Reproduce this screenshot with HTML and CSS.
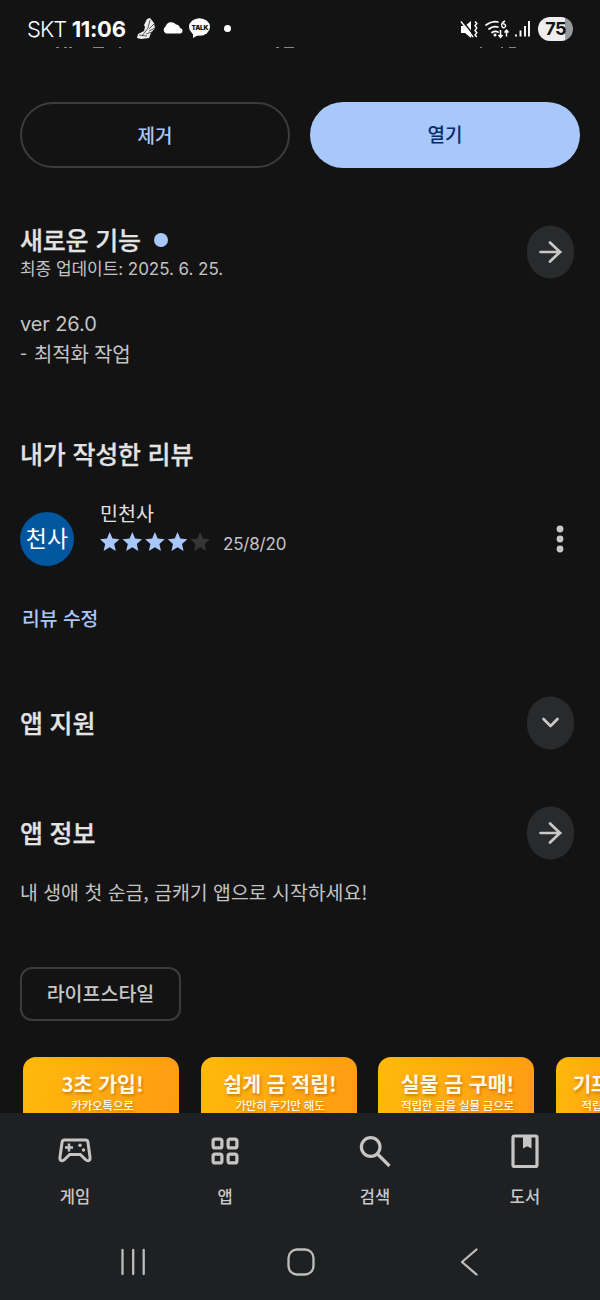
FILE: index.html
```html
<!DOCTYPE html>
<html lang="ko">
<head>
<meta charset="utf-8">
<title>앱 정보</title>
<link rel="stylesheet" href="styles.css">
</head>
<body>
<div class="phone">
  <header class="status">
    <span class="carrier">SKT</span>
    <span class="clock">11:06</span>
    <svg class="notif" width="96" height="24" viewBox="0 0 96 24">
      <path d="M10 2l3-1 4 5 1 5-4 5-2 5-8 1-4-1 1-4 6-3 1-4-1-2z" fill="#eee"/>
      <path d="M13 3l-2 8-6 8M17 7l-5 5M18 11l-6 3M15 15l-6 2M2 18l8 1" stroke="#333" stroke-width=".8" fill="none"/>
      <path d="M29 16.500a4 4 0 0 1-.5-7 6 6 0 0 1 10.500-2 4.500 4.500 0 0 1 4 3.500 2.800 2.800 0 0 1 .5 5.500z" fill="#fff"/>
      <ellipse cx="62.500" cy="10" rx="10.500" ry="8.700" fill="#fff"/>
      <path d="M56 15v6l7-4z" fill="#fff"/>
      <text class="talk" x="54.600" y="12.500">TALK</text>
      <circle cx="90.500" cy="11.500" r="3.500" fill="#fff"/>
    </svg>
    <svg class="signals" width="70" height="22" viewBox="0 0 70 22">
      <path d="M1 6h4l6-5v17l-6-5H1z" fill="#fff"/>
      <path d="M2 0l12 15.500" stroke="#131313" stroke-width="1.500"/>
      <path d="M1 1.500l12 15.500" stroke="#fff" stroke-width="1.500"/>
      <path d="M15 1.500l1.800 2-1.800 2.300 1.800 2.300-1.800 2.300 1.800 2.300-1.800 2.200 1.800 2" stroke="#fff" stroke-width="1.500" fill="none"/>
      <g fill="none" stroke="#fff" stroke-width="1.700" stroke-linecap="round"><path d="M26 5q6-4.500 12-3"/><path d="M29 9q4-3.500 9-2"/><path d="M32 12.500q3-2 6-.5"/></g>
      <circle cx="35" cy="15" r="1.500" fill="#fff"/>
      <path d="M45 1q-4 2-3.200 5a1.900 1.900 0 1 0 1.200-2" stroke="#fff" stroke-width="1.400" fill="none"/>
      <path d="M40.500 10v7m-2-2l2 2.300 2-2.300M46.500 16.500v-6m-2 2l2-2.300 2 2.300" stroke="#fff" stroke-width="1.500" fill="none"/>
      <path d="M56 14.500v2M60.500 10.500v6M65 6v10.500M69 1v15.500" stroke="#fff" stroke-width="1.900"/>
    </svg>
    <span class="battery">75</span>
  </header>

  <main class="content">
    <svg class="cutline" width="600" height="2" viewBox="0 0 600 2"><path d="M56 .5h3M64 .5h3M69 .5h3M93 .5h11M119 .5h2M276 .5h3M284 .5h10M480 .5h2M501 .5h2M509 .5h7" stroke="#888" stroke-width="1"/></svg>
    <div class="actions">
      <button class="btn btn-outline">제거</button>
      <button class="btn btn-fill">열기</button>
    </div>

    <section class="row whats-new">
      <div class="new-head">
        <h2 class="title new-title">새로운 기능<i class="dot"></i></h2>
        <p class="updated">최종 업데이트: 2025. 6. 25.</p>
      </div>
      <svg class="circle" viewBox="0 0 47 54"><rect y=".5" width="47" height="53" rx="23.500" ry="25"/><path d="M13.500 27h20M23 17.500l10 9.500-10 9.500"/></svg>
    </section>
    <div class="notes"><p class="version">ver 26.0</p><p class="change"><span class="dash">-</span>최적화 작업</p></div>

    <h2 class="title my-review">내가 작성한 리뷰</h2>
    <section class="review">
      <div class="avatar">천사</div>
      <div class="review-body">
        <p class="name">민천사</p>
        <div class="rating">
          <svg class="stars" width="110" height="20" viewBox="0 0 110 20">
            <defs><path id="star" d="M9.700 0l2.800 6.600 7 .6-5.300 4.700 1.600 7-6.100-3.700-6.100 3.700 1.600-7L0 7.200l7-.6z"/></defs>
            <g fill="#a8c7fa"><use href="#star"/><use href="#star" x="22.600"/><use href="#star" x="45.200"/><use href="#star" x="67.800"/></g>
            <use href="#star" x="90.400" fill="#353535"/>
          </svg>
          <span class="date">25/8/20</span>
        </div>
      </div>
      <svg class="more" width="8" height="28" viewBox="0 0 8 28"><circle cx="4" cy="4" r="3.400"/><circle cx="4" cy="14" r="3.400"/><circle cx="4" cy="24" r="3.400"/></svg>
    </section>
    <a class="edit">리뷰 수정</a>

    <section class="row support">
      <h2 class="title">앱 지원</h2>
      <svg class="circle" viewBox="0 0 47 54"><rect y=".5" width="47" height="53" rx="23.500" ry="25"/><path d="M16.500 23l7 7 7-7"/></svg>
    </section>
    <section class="row about">
      <h2 class="title">앱 정보</h2>
      <svg class="circle" viewBox="0 0 47 54"><rect y=".5" width="47" height="53" rx="23.500" ry="25"/><path d="M13.500 27h20M23 17.500l10 9.500-10 9.500"/></svg>
    </section>
    <p class="summary">내 생애 첫 순금, 금캐기 앱으로 시작하세요!</p>
    <div class="chip">라이프스타일</div>

    <div class="shots">
      <div class="shot"><b>3초 가입!</b><small>카카오톡으로</small></div>
      <div class="shot"><b>쉽게 금 적립!</b><small>가만히 두기만 해도</small></div>
      <div class="shot"><b>실물 금 구매!</b><small>적립한 금을 실물 금으로</small></div>
      <div class="shot shot-last"><b>기프</b><small>적립</small></div>
    </div>
  </main>

  <nav class="tabs">
    <div class="tab">
      <svg width="36" height="36" viewBox="0 0 36 36"><path d="M7.500 7h21q2 0 2.400 2L33 24q.5 3.800-2 3.800-1.300 0-2.300-1l-5.400-5.300H12.700l-5.400 5.300q-1 1-2.300 1-2.500 0-2-3.800L5.100 9q.4-2 2.400-2z" fill="none" stroke="#c5c5c5" stroke-width="3"/><path d="M8 14.500h8M12 10.500v8" stroke="#c5c5c5" stroke-width="2.500"/><circle cx="23" cy="12.300" r="1.700" fill="#c5c5c5"/><circle cx="26.500" cy="17" r="1.700" fill="#c5c5c5"/></svg>
      <span>게임</span>
    </div>
    <div class="tab">
      <svg width="36" height="36" viewBox="0 0 36 36" fill="none" stroke="#c5c5c5" stroke-width="3.200"><rect x="6.100" y="6.100" width="8.800" height="8.800" rx="2"/><rect x="21.100" y="6.100" width="8.800" height="8.800" rx="2"/><rect x="6.100" y="21.100" width="8.800" height="8.800" rx="2"/><rect x="21.100" y="21.100" width="8.800" height="8.800" rx="2"/></svg>
      <span>앱</span>
    </div>
    <div class="tab">
      <svg width="36" height="36" viewBox="0 0 36 36" fill="none" stroke="#c5c5c5" stroke-width="3.200"><circle cx="13.700" cy="14" r="9.300"/><path d="M20.500 21L32.500 33"/></svg>
      <span>검색</span>
    </div>
    <div class="tab">
      <svg width="36" height="36" viewBox="0 0 36 36"><rect x="6" y="3" width="24" height="30.500" rx="1.500" fill="none" stroke="#c5c5c5" stroke-width="3.200"/><path d="M16 3h8.500v12.500l-4.200-2.300-4.300 2.300z" fill="#c5c5c5"/></svg>
      <span>도서</span>
    </div>
  </nav>
  <footer class="sysnav">
    <svg width="26" height="28" viewBox="0 0 26 28"><path d="M2.500 2v24M13.200 2v24M23.700 2v24"/></svg>
    <svg class="home" width="28" height="28" viewBox="0 0 28 28"><rect x="1.500" y="1.500" width="25" height="25" rx="8.500"/></svg>
    <svg width="18" height="28" viewBox="0 0 18 28"><path d="M16.500 1.500L2 14l14.500 12.500"/></svg>
  </footer>
</div>
</body>
</html>
```
FILE: styles.css
```css
* { box-sizing: border-box; margin: 0; padding: 0; }
body { width: 600px; height: 1300px; overflow: hidden; background: #131313; color: #e3e3e3; font-family: "Noto Sans CJK KR", sans-serif; }
svg { display: block; flex: none; }
.phone { display: flex; flex-direction: column; height: 1300px; white-space: nowrap; }
.status { height: 47px; flex: none; display: flex; align-items: center; padding: 10px 27px 0; color: #fff; font-family: Inter, sans-serif; }
.carrier { width: 45px; font-size: 22px; letter-spacing: -1px; font-weight: 300; }
.clock { width: 66px; font-size: 22px; font-weight: 700; letter-spacing: -.3px; }
.talk { font: 900 6.500px Inter, sans-serif; fill: #131313; letter-spacing: -.3px; }
.notif { margin-top: 1px; }
.signals { margin-left: 227px; margin-top: 4px; }
.battery { width: 35px; height: 24px; margin-left: 8px; border-radius: 12px; background: linear-gradient(90deg, #eee 78%, #999 78%); color: #131313; font-size: 18px; line-height: 24px; font-weight: 700; text-align: center; letter-spacing: -.5px; }
.content { height: 1066px; flex: none; overflow: hidden; display: flex; flex-direction: column; align-items: flex-start; }
.content > * { flex: none; }
.actions { display: flex; gap: 20px; margin: 53px 0 0 20px; }
.btn { width: 270px; height: 66px; border-radius: 33px; font: 500 19px/62px "Noto Sans CJK KR", sans-serif; border: 0; padding-bottom: 2px; }
.btn-outline { background: none; border: 2px solid #3c3c3c; color: #a8c7fa; }
.btn-fill { background: #a8c7fa; color: #062e6f; }
.title { font-size: 25px; line-height: 36px; font-weight: 500; letter-spacing: -.2px; -webkit-text-stroke: .25px; }
.row { width: 600px; padding: 0 26px 0 20px; display: flex; align-items: center; justify-content: space-between; height: 54px; }
.row > .title { padding-bottom: 2px; }
.circle { width: 47px; height: 54px; }
.circle rect { fill: #282a2c; }
.circle path { fill: none; stroke: #c8c8c8; stroke-width: 2.700; stroke-linecap: round; stroke-linejoin: round; }
.whats-new { margin-top: 57px; }
.new-head { padding-bottom: 2px; }
.new-title { display: flex; align-items: center; gap: 13px; }
.dot { width: 14px; height: 14px; margin-top: 2px; border-radius: 50%; background: #a8c7fa; }
.updated { font: 17px/24px Inter, "Noto Sans CJK KR", sans-serif; color: #c4c4c4; letter-spacing: -.05px; }
.notes { margin: 30px 0 0 20px; color: #c4c4c4; font-size: 20px; line-height: 30px; }
.version { font: 20px/30px Inter, sans-serif; letter-spacing: -.1px; }
.change { letter-spacing: -.2px; }
.dash { display: inline-block; width: 14px; }
.my-review { margin: 66px 0 0 20px; }
.review { display: flex; width: 600px; height: 70px; margin: 28px 0 0; padding-left: 20px; }
.avatar { width: 54px; height: 54px; margin-top: 13px; border-radius: 50%; background: #00569f; color: #fff; font-size: 23px; line-height: 50px; text-align: center; }
.review-body { width: 482px; padding-left: 26px; }
.name { font-size: 19.500px; line-height: 28px; }
.rating { display: flex; align-items: center; height: 28px; margin-top: 1px; }
.date { margin: 4px 0 0 13px; font: 17px/24px Inter, sans-serif; color: #c4c4c4; letter-spacing: -.2px; }
.more { margin: 26px 0 0; fill: #c8c8c8; }
.edit { margin: 35px 0 0 22px; font-size: 19.300px; line-height: 28px; font-weight: 500; color: #a8c7fa; }
.support { margin-top: 64px; }
.about { margin-top: 56px; }
.summary { margin: 18px 0 0 20px; font-size: 19.400px; line-height: 28px; color: #c4c4c4; }
.chip { margin: 61px 0 0 20px; width: 161px; height: 54px; border: 2px solid #3c3c3c; border-radius: 12px; text-align: center; font-size: 19.500px; line-height: 48px; font-weight: 500; color: #c8c8c8; }
.shots { display: flex; gap: 21.500px; margin: 36px 0 0 23px; }
.shot { width: 156px; height: 280px; flex: none; padding: 12px 0 0 3px; border-radius: 13px; background: linear-gradient(100deg, #ffb90a, #ff9416); color: #fff8e4; text-align: center; text-shadow: 1px 2px 3px #a85a0099; }
.shot b { display: block; font-size: 20.500px; line-height: 28px; }
.shot small { display: block; font-size: 11.500px; line-height: 16px; font-weight: 500; letter-spacing: -.2px; }
.shot.shot-last { text-align: left; width: 60px; }
.shot-last b { padding-left: 14px; letter-spacing: -.7px; }
.shot-last small { padding-left: 23px; }
.tabs { height: 111px; flex: none; display: grid; grid-template-columns: repeat(4, 150px); background: #1f2022; }
.tab { display: flex; flex-direction: column; align-items: center; padding-top: 20px; color: #c8c8c8; font-size: 16.500px; font-weight: 500; line-height: 24px; }
.tab span { margin-top: 15px; }
.sysnav { height: 76px; background: #1f2022; display: flex; justify-content: space-between; align-items: flex-start; padding: 24px 122px 0 120px; fill: none; stroke: #bdbdbd; stroke-width: 2.300; stroke-linecap: round; stroke-linejoin: round; }
.home { margin-right: 4px; }
```
